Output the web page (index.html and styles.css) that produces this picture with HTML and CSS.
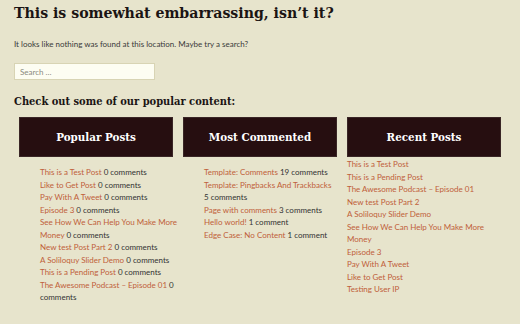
FILE: index.html
```html
<!DOCTYPE html>
<html lang="en">
<head>
    <meta charset="UTF-8">
    <title>Nothing Found</title>
    <link rel="stylesheet" href="styles.css">
</head>
<body>
    <div class="page">
        <h1 class="page-title">This is somewhat embarrassing, isn’t it?</h1>
        <p class="intro">It looks like nothing was found at this location. Maybe try a search?</p>

        <form class="search-form">
            <input type="search" class="search-field" placeholder="Search …">
        </form>

        <h2 class="popular-title">Check out some of our popular content:</h2>

        <div class="widgets">
            <div class="widget">
                <h3 class="widget-title">Popular Posts</h3>
                <ul class="widget-list indented">
                    <li><a href="#">This is a Test Post</a> 0 comments</li>
                    <li><a href="#">Like to Get Post</a> 0 comments</li>
                    <li><a href="#">Pay With A Tweet</a> 0 comments</li>
                    <li><a href="#">Episode 3</a> 0 comments</li>
                    <li><a href="#">See How We Can Help You Make More Money</a> 0 comments</li>
                    <li><a href="#">New test Post Part 2</a> 0 comments</li>
                    <li><a href="#">A Soliloquy Slider Demo</a> 0 comments</li>
                    <li><a href="#">This is a Pending Post</a> 0 comments</li>
                    <li><a href="#">The Awesome Podcast – Episode 01</a> 0 comments</li>
                </ul>
            </div>

            <div class="widget">
                <h3 class="widget-title">Most Commented</h3>
                <ul class="widget-list indented">
                    <li><a href="#">Template: Comments</a> 19 comments</li>
                    <li><a href="#">Template: Pingbacks And Trackbacks</a> 5&nbsp;comments</li>
                    <li><a href="#">Page with comments</a> 3 comments</li>
                    <li><a href="#">Hello world!</a> 1 comment</li>
                    <li><a href="#">Edge Case: No Content</a> 1 comment</li>
                </ul>
            </div>

            <div class="widget">
                <h3 class="widget-title">Recent Posts</h3>
                <ul class="widget-list">
                    <li><a href="#">This is a Test Post</a></li>
                    <li><a href="#">This is a Pending Post</a></li>
                    <li><a href="#">The Awesome Podcast – Episode 01</a></li>
                    <li><a href="#">New test Post Part 2</a></li>
                    <li><a href="#">A Soliloquy Slider Demo</a></li>
                    <li><a href="#">See How We Can Help You Make More Money</a></li>
                    <li><a href="#">Episode 3</a></li>
                    <li><a href="#">Pay With A Tweet</a></li>
                    <li><a href="#">Like to Get Post</a></li>
                    <li><a href="#">Testing User IP</a></li>
                </ul>
            </div>
        </div>
    </div>
</body>
</html>
```

FILE: styles.css
```css
* {
    margin: 0;
    padding: 0;
    box-sizing: border-box;
}

body {
    background: #e7e4cc;
    color: #333;
    font-family: Lato, "Open Sans", sans-serif;
    font-size: 8px;
}

.page {
    padding: 0 14px;
}

.page-title {
    font-family: "DejaVu Serif Condensed", "DejaVu Serif", serif;
    font-weight: bold;
    font-size: 15.7px;
    line-height: 26px;
    color: #1b1414;
}

.intro {
    margin-top: 12px;
    line-height: 12px;
    color: #3a3a3a;
}

.search-form {
    margin-top: 13px;
    line-height: 0;
}

.search-field {
    width: 141px;
    height: 17px;
    padding: 0 5px;
    background: #fdfdf2;
    border: 1px solid #d8d4b4;
    font-family: inherit;
    font-size: 8px;
    color: #555;
    outline: none;
}

.search-field::placeholder {
    color: #8a8a80;
}

.popular-title {
    margin-top: 13px;
    font-family: "DejaVu Serif Condensed", "DejaVu Serif", serif;
    font-weight: bold;
    font-size: 11px;
    line-height: 18px;
    color: #1b1414;
}

.widgets {
    display: flex;
    gap: 10px;
    margin: 6px 0 0 5px;
}

.widget {
    width: 154px;
}

.widget-title {
    height: 40px;
    display: flex;
    align-items: center;
    justify-content: center;
    background: #260e10;
    border: 1px solid #3a2626;
    font-family: "DejaVu Serif Condensed", "DejaVu Serif", serif;
    font-weight: bold;
    font-size: 11.5px;
    color: #fff;
}

.widget-list {
    list-style: none;
    margin-top: 1px;
    line-height: 12.5px;
}

.widget-list.indented {
    margin: 9px -8px 0 0;
    padding-left: 21px;
}

.widget-list a {
    color: #c0603a;
    text-decoration: none;
}
```
